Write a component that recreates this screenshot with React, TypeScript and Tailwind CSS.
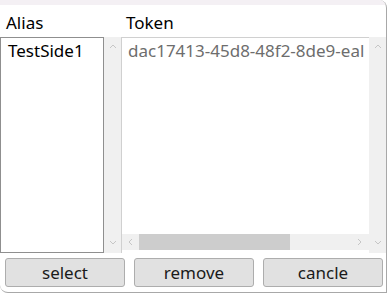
import React from "react";

const font = { fontFamily: '"Noto Sans", "Open Sans", sans-serif' };

function Chevron({ dir }: { dir: "up" | "down" | "left" | "right" }) {
  const d = {
    up: "M1 5 L4 2 L7 5",
    down: "M1 2 L4 5 L7 2",
    left: "M5 1 L2 4 L5 7",
    right: "M2 1 L5 4 L2 7",
  }[dir];
  return (
    <svg width="8" height="8" viewBox="0 0 8 8" className="block">
      <path d={d} fill="none" stroke="#c6c6c6" strokeWidth="1" />
    </svg>
  );
}

function VScroll() {
  return (
    <div className="flex w-[17px] flex-col items-center justify-between bg-[#f0f0f0] py-[6px]">
      <Chevron dir="up" />
      <Chevron dir="down" />
    </div>
  );
}

export default function App() {
  return (
    <div className="h-[294px] w-[388px] overflow-hidden bg-white text-[17px] text-black" style={font}>
      <div className="flex h-[293px] w-[387px] flex-col overflow-hidden rounded-tr-[8px] rounded-bl-[8px] border-r border-b border-[#a8a8a8] bg-white">
        <div className="h-[5px] bg-[#f4f0f4]" />
        <div className="flex h-[32px] items-center pt-[3px]">
          <span className="w-[126px] pl-[6px] leading-none">Alias</span>
          <span className="leading-none">Token</span>
        </div>
        <div className="flex h-[216px]">
          <div className="w-[104px] border border-[#8f8f8f] bg-white px-[7px] pt-[1px] leading-[24px]">
            TestSide1
          </div>
          <VScroll />
          <div className="flex w-[248px] flex-col border-t border-l border-[#d0d0d0]">
            <div className="flex-1 overflow-hidden whitespace-nowrap pl-[6px] pt-[1px] leading-[24px] text-[#6d6d6d]">
              dac17413-45d8-48f2-8de9-eal
            </div>
            <div className="mb-[3px] flex h-[16px] items-center bg-[#f0f0f0]">
              <div className="flex w-[17px] justify-center">
                <Chevron dir="left" />
              </div>
              <div className="h-full w-[151px] bg-[#cdcdcd]" />
              <div className="flex flex-1 justify-end pr-[5px]">
                <Chevron dir="right" />
              </div>
            </div>
          </div>
          <VScroll />
        </div>
        <div className="flex items-center gap-[9px] pl-[5px] pt-[5px]">
          {["select", "remove", "cancle"].map((b) => (
            <button
              key={b}
              className="h-[29px] w-[120px] rounded-[3px] border border-[#adadad] bg-[#e1e1e1] leading-none text-[#1a1a1a]"
            >
              {b}
            </button>
          ))}
        </div>
      </div>
    </div>
  );
}
